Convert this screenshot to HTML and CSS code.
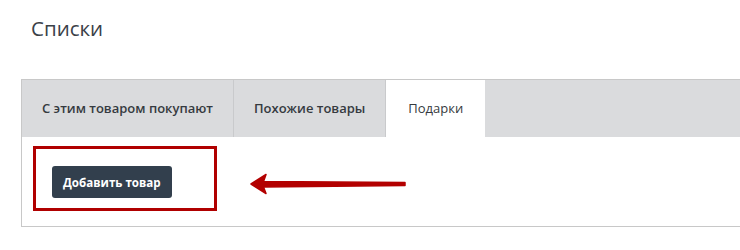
FILE: index.html
```html
<!DOCTYPE html>
<html lang="ru">
  <head>
    <meta charset="UTF-8" />
    <meta name="viewport" content="width=device-width, initial-scale=1.0" />
    <title>Списки</title>
    <link rel="stylesheet" href="styles.css">
  </head>
  <body>
    <h1 class="page-title">Списки</h1>
    <div class="lists-panel">
      <ul class="tabs">
        <li class="tab">С этим товаром покупают</li>
        <li class="tab">Похожие товары</li>
        <li class="tab active">Подарки</li>
      </ul>
      <div class="tab-body">
        <div class="highlight">
          <button type="button" class="btn-add">Добавить товар</button>
        </div>
        <svg class="arrow" width="160" height="22" viewBox="0 0 160 22">
          <path d="M1,11 L16,1.5 L13.5,8.5 L155,9.5 L155,12.5 L13.5,14 L16,20.5 Z"
                fill="#b30000" stroke="#b30000" stroke-width="1.5" stroke-linejoin="round" />
        </svg>
      </div>
    </div>
  </body>
</html>
```

FILE: styles.css
```css
body {
  margin: 0;
  font-family: "Open Sans", "Liberation Sans", sans-serif;
  background-color: #fff;
  color: #333;
  overflow: hidden;
}
.page-title {
  margin: 0;
  padding: 14px 0 0 31px;
  font-size: 20.5px;
  font-weight: normal;
  line-height: 28px;
  color: #3b4148;
}
.lists-panel {
  margin: 37px 0 0 21px;
  border: 1px solid #c8c8c8;
  border-right: none;
}
.tabs {
  display: flex;
  margin: 0;
  padding: 0;
  list-style: none;
  background-color: #dadbdd;
}
.tab {
  padding: 0 20px;
  height: 57px;
  line-height: 57px;
  font-size: 13px;
  font-weight: 600;
  color: #353a40;
  border-right: 1px solid #c9cacc;
}
.tab.active {
  background-color: #fff;
  padding: 0 22px;
  font-weight: normal;
  border-right: none;
}
.tab-body {
  display: flex;
  align-items: center;
  padding: 9px 0 15px 11px;
}
.highlight {
  border: 3px solid #b00000;
  padding: 17px 42px 10px 16px;
}
.btn-add {
  display: block;
  height: 32px;
  padding: 0 11px;
  background-color: #323f4d;
  color: #fff;
  border: none;
  border-radius: 3px;
  font-family: "Open Sans", "Liberation Sans", sans-serif;
  font-size: 11.6px;
  font-weight: bold;
}
.arrow {
  margin: 10px 0 0 33px;
}
```
